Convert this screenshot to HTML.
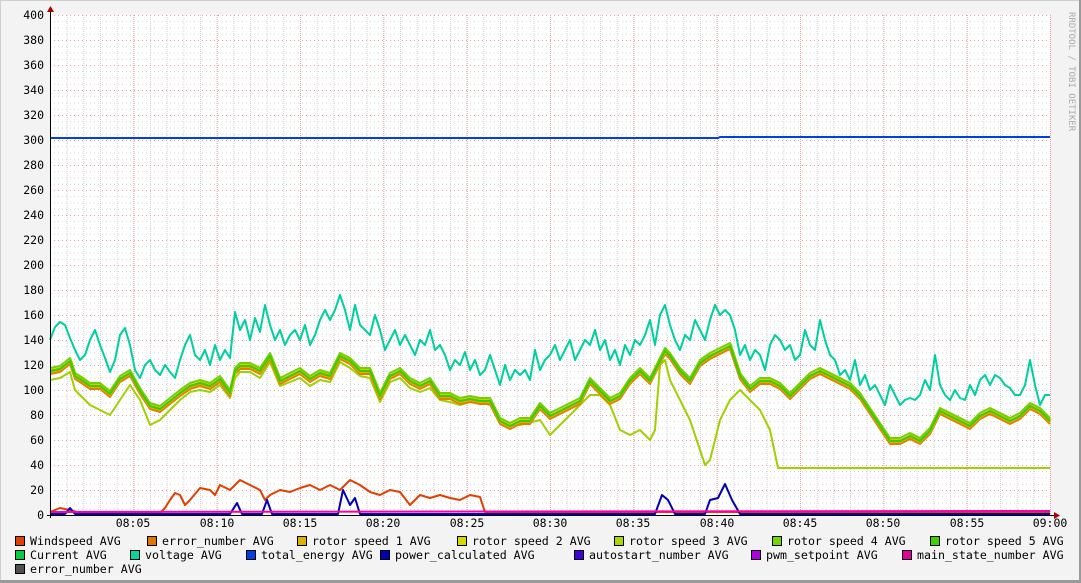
<!DOCTYPE html>
<html><head><meta charset="utf-8"><style>
html,body{margin:0;padding:0;background:#f3f3f3;}
svg{display:block;font-family:"DejaVu Sans Mono","Liberation Mono",monospace;}
</style></head><body>
<svg width="1081" height="583" viewBox="0 0 1081 583" xmlns="http://www.w3.org/2000/svg">
<defs>
<pattern id="hmin" patternUnits="userSpaceOnUse" x="50" y="15" width="4" height="6.25"><line x1="0" y1="0.5" x2="1" y2="0.5" stroke="#d4d4d4" stroke-width="1"/></pattern>
<pattern id="vmin" patternUnits="userSpaceOnUse" x="50" y="15" width="16.6667" height="2"><line x1="0.5" y1="0" x2="0.5" y2="1" stroke="#d4d4d4" stroke-width="1"/></pattern>
<pattern id="hmaj" patternUnits="userSpaceOnUse" x="50" y="15" width="4" height="25"><line x1="0" y1="0.5" x2="1" y2="0.5" stroke="#eaa0a0" stroke-width="1"/></pattern>
<pattern id="vmaj" patternUnits="userSpaceOnUse" x="50" y="15" width="83.333" height="2"><line x1="0.5" y1="0" x2="0.5" y2="1" stroke="#eaa0a0" stroke-width="1"/></pattern>
</defs>
<rect x="0" y="0" width="1081" height="583" fill="#f3f3f3"/>
<line x1="0" y1="0.5" x2="1081" y2="0.5" stroke="#cfcfcf"/>
<line x1="0.5" y1="0" x2="0.5" y2="583" stroke="#cfcfcf"/>
<line x1="0" y1="581.5" x2="1081" y2="581.5" stroke="#9a9a9a" stroke-width="3"/>
<line x1="1080" y1="0" x2="1080" y2="583" stroke="#9a9a9a" stroke-width="2"/>
<rect x="50" y="15" width="1000" height="500" fill="#fff"/>
<rect x="50" y="15" width="1000" height="500" fill="url(#hmin)"/>
<rect x="50" y="15" width="1000" height="500" fill="url(#vmin)"/>
<rect x="50" y="15" width="1000" height="500" fill="url(#hmaj)"/>
<rect x="50" y="15" width="1001" height="500" fill="url(#vmaj)"/>
<g font-size="11.5" fill="#000" text-anchor="end">
<text x="44" y="19">400</text><text x="44" y="44">380</text><text x="44" y="69">360</text><text x="44" y="94">340</text><text x="44" y="119">320</text><text x="44" y="144">300</text><text x="44" y="169">280</text><text x="44" y="194">260</text><text x="44" y="219">240</text><text x="44" y="244">220</text><text x="44" y="269">200</text><text x="44" y="294">180</text><text x="44" y="319">160</text><text x="44" y="344">140</text><text x="44" y="369">120</text><text x="44" y="394">100</text><text x="44" y="419">80</text><text x="44" y="444">60</text><text x="44" y="469">40</text><text x="44" y="494">20</text><text x="44" y="519">0</text>
</g>
<g font-size="11.5" fill="#000" text-anchor="middle">
<text x="133" y="527">08:05</text><text x="217" y="527">08:10</text><text x="300" y="527">08:15</text><text x="383" y="527">08:20</text><text x="467" y="527">08:25</text><text x="550" y="527">08:30</text><text x="633" y="527">08:35</text><text x="717" y="527">08:40</text><text x="800" y="527">08:45</text><text x="883" y="527">08:50</text><text x="967" y="527">08:55</text><text x="1050" y="527">09:00</text>
</g>
<text transform="translate(1069,12) rotate(90)" font-size="9" fill="#aaa">RRDTOOL / TOBI OETIKER</text>
<g fill="none" stroke-width="2" stroke-linejoin="round">
<polyline stroke="#0040e0" points="50,138 718,138 720,137 1050,137"/>
<polyline stroke="#00d0a0" points="50,340 55,327 60,322 65,325 70,338 75,350 80,360 85,355 90,340 95,330 100,345 105,358 110,372 115,360 120,335 125,328 130,345 135,370 140,378 145,365 150,360 155,370 160,375 165,365 170,372 175,378 180,360 185,345 190,335 195,355 200,360 205,350 210,365 215,345 220,360 225,350 230,358 235,312 240,330 245,320 250,340 255,318 260,332 265,305 270,325 275,340 280,330 285,345 290,335 295,330 300,340 305,325 310,345 315,335 320,320 325,310 330,320 335,310 340,295 345,310 350,330 355,305 360,325 365,330 370,335 375,315 380,330 385,350 390,340 395,330 400,345 405,335 410,345 415,355 420,340 425,345 430,330 435,350 440,345 445,355 450,370 455,360 460,365 465,352 470,370 475,360 480,375 485,370 490,355 495,370 500,385 505,365 510,380 515,370 520,375 525,370 530,380 535,350 540,370 545,360 550,355 555,345 560,360 565,350 570,340 575,360 580,350 585,340 590,345 595,330 600,350 605,340 610,360 615,350 620,365 625,345 630,355 635,340 640,345 645,335 650,320 655,345 660,315 665,305 670,325 675,340 680,350 685,335 690,340 695,320 700,330 705,340 710,320 715,305 720,315 725,310 730,315 735,330 740,355 745,345 750,360 755,350 760,355 765,370 770,345 775,335 780,340 785,350 790,345 795,360 800,355 805,330 810,345 815,350 820,320 825,340 830,355 835,360 840,375 845,370 850,380 855,360 860,385 865,375 870,390 875,385 880,395 885,405 890,385 895,395 900,405 905,400 910,398 915,400 920,395 925,380 930,390 935,355 940,385 945,395 950,400 955,390 960,398 965,400 970,385 975,395 980,380 985,375 990,385 995,375 1000,378 1005,385 1010,388 1015,395 1020,395 1025,385 1030,360 1035,385 1040,405 1045,395 1050,395"/>
<polyline stroke="#a0d000" points="50,380 60,378 70,372 75,390 80,395 90,405 100,410 110,415 120,400 130,385 140,400 150,425 160,420 170,410 180,400 190,392 200,390 210,392 220,385 230,398 235,378 240,372 250,372 260,378 270,362 280,386 290,382 300,378 310,386 320,380 330,382 340,362 350,368 360,376 370,378 380,402 390,382 400,378 410,388 420,392 430,388 440,400 450,402 460,405 470,402 480,402 490,405 500,420 510,425 520,425 540,420 550,435 560,425 570,415 580,405 590,395 600,395 610,405 620,430 630,435 640,430 650,440 655,430 660,365 665,360 670,380 680,400 690,420 700,450 705,465 710,460 715,440 720,420 730,400 740,390 750,400 760,410 770,430 778,468 1050,468"/>
<polyline stroke="#e08000" transform="translate(0,4)" points="50,370 60,368 70,360 75,375 80,378 90,385 100,385 110,393 120,378 130,372 140,390 150,405 160,408 170,400 180,392 190,385 200,382 210,385 220,378 230,392 235,370 240,365 250,365 260,370 270,355 280,380 290,375 300,370 310,378 320,372 330,375 340,355 350,360 360,370 370,370 380,395 390,375 400,370 410,380 420,385 430,380 440,395 450,395 460,400 470,398 480,400 490,400 500,420 510,425 520,420 530,420 540,405 550,415 560,410 570,405 580,400 590,380 600,390 610,400 620,395 630,380 640,370 650,380 660,360 665,350 670,355 680,370 690,380 700,362 710,355 720,350 730,345 740,375 750,388 760,380 770,380 780,385 790,395 800,385 810,375 820,370 830,375 840,380 850,385 860,395 870,410 880,425 890,440 900,440 910,435 920,440 930,430 940,410 950,415 960,420 970,425 980,415 990,410 1000,415 1010,420 1020,415 1030,405 1040,410 1050,420"/>
<polyline stroke="#e0b000" transform="translate(0,2)" points="50,370 60,368 70,360 75,375 80,378 90,385 100,385 110,393 120,378 130,372 140,390 150,405 160,408 170,400 180,392 190,385 200,382 210,385 220,378 230,392 235,370 240,365 250,365 260,370 270,355 280,380 290,375 300,370 310,378 320,372 330,375 340,355 350,360 360,370 370,370 380,395 390,375 400,370 410,380 420,385 430,380 440,395 450,395 460,400 470,398 480,400 490,400 500,420 510,425 520,420 530,420 540,405 550,415 560,410 570,405 580,400 590,380 600,390 610,400 620,395 630,380 640,370 650,380 660,360 665,350 670,355 680,370 690,380 700,362 710,355 720,350 730,345 740,375 750,388 760,380 770,380 780,385 790,395 800,385 810,375 820,370 830,375 840,380 850,385 860,395 870,410 880,425 890,440 900,440 910,435 920,440 930,430 940,410 950,415 960,420 970,425 980,415 990,410 1000,415 1010,420 1020,415 1030,405 1040,410 1050,420"/>
<polyline stroke="#d0d000" transform="translate(1,0)" points="50,370 60,368 70,360 75,375 80,378 90,385 100,385 110,393 120,378 130,372 140,390 150,405 160,408 170,400 180,392 190,385 200,382 210,385 220,378 230,392 235,370 240,365 250,365 260,370 270,355 280,380 290,375 300,370 310,378 320,372 330,375 340,355 350,360 360,370 370,370 380,395 390,375 400,370 410,380 420,385 430,380 440,395 450,395 460,400 470,398 480,400 490,400 500,420 510,425 520,420 530,420 540,405 550,415 560,410 570,405 580,400 590,380 600,390 610,400 620,395 630,380 640,370 650,380 660,360 665,350 670,355 680,370 690,380 700,362 710,355 720,350 730,345 740,375 750,388 760,380 770,380 780,385 790,395 800,385 810,375 820,370 830,375 840,380 850,385 860,395 870,410 880,425 890,440 900,440 910,435 920,440 930,430 940,410 950,415 960,420 970,425 980,415 990,410 1000,415 1010,420 1020,415 1030,405 1040,410 1050,420"/>
<polyline stroke="#70d000" transform="translate(0,-2)" points="50,370 60,368 70,360 75,375 80,378 90,385 100,385 110,393 120,378 130,372 140,390 150,405 160,408 170,400 180,392 190,385 200,382 210,385 220,378 230,392 235,370 240,365 250,365 260,370 270,355 280,380 290,375 300,370 310,378 320,372 330,375 340,355 350,360 360,370 370,370 380,395 390,375 400,370 410,380 420,385 430,380 440,395 450,395 460,400 470,398 480,400 490,400 500,420 510,425 520,420 530,420 540,405 550,415 560,410 570,405 580,400 590,380 600,390 610,400 620,395 630,380 640,370 650,380 660,360 665,350 670,355 680,370 690,380 700,362 710,355 720,350 730,345 740,375 750,388 760,380 770,380 780,385 790,395 800,385 810,375 820,370 830,375 840,380 850,385 860,395 870,410 880,425 890,440 900,440 910,435 920,440 930,430 940,410 950,415 960,420 970,425 980,415 990,410 1000,415 1010,420 1020,415 1030,405 1040,410 1050,420"/>
<polyline stroke="#40c800" transform="translate(0,1)" points="50,370 60,368 70,360 75,375 80,378 90,385 100,385 110,393 120,378 130,372 140,390 150,405 160,408 170,400 180,392 190,385 200,382 210,385 220,378 230,392 235,370 240,365 250,365 260,370 270,355 280,380 290,375 300,370 310,378 320,372 330,375 340,355 350,360 360,370 370,370 380,395 390,375 400,370 410,380 420,385 430,380 440,395 450,395 460,400 470,398 480,400 490,400 500,420 510,425 520,420 530,420 540,405 550,415 560,410 570,405 580,400 590,380 600,390 610,400 620,395 630,380 640,370 650,380 660,360 665,350 670,355 680,370 690,380 700,362 710,355 720,350 730,345 740,375 750,388 760,380 770,380 780,385 790,395 800,385 810,375 820,370 830,375 840,380 850,385 860,395 870,410 880,425 890,440 900,440 910,435 920,440 930,430 940,410 950,415 960,420 970,425 980,415 990,410 1000,415 1010,420 1020,415 1030,405 1040,410 1050,420 1050,420"/>
<polyline stroke="#e04000" points="50,512 60,508 70,510 80,513 160,513 165,508 170,500 175,493 180,495 185,505 190,500 200,488 210,490 215,495 220,485 230,490 240,480 250,485 260,490 265,500 270,495 280,490 290,492 300,488 310,485 320,490 330,485 340,490 350,480 360,485 370,492 380,495 390,490 400,492 410,505 420,495 430,498 440,495 450,498 460,500 470,495 480,497 485,512 1050,512"/>
<polyline stroke="#0000b0" points="50,514 65,514 70,508 75,514 230,514 237,503 242,514 262,514 267,500 272,514 338,514 343,490 350,505 355,498 360,514 655,514 662,495 668,500 675,514 705,514 710,500 718,498 725,484 732,500 740,514 1050,514"/>
<polyline stroke="#ff00a0" points="50,512 1050,511"/>
</g>
<line x1="50.5" y1="10" x2="50.5" y2="518" stroke="#000"/>
<line x1="47" y1="515.5" x2="1055" y2="515.5" stroke="#000"/>
<polygon points="47,12 54,12 50.5,6" fill="#a00"/>
<polygon points="1054,512 1054,519 1060,515.5" fill="#a00"/>
<g font-size="11.6" fill="#000" stroke="#000" stroke-width="1">
<rect x="15.5" y="536.5" width="9" height="9" fill="#e04000"/><rect x="147.5" y="536.5" width="9" height="9" fill="#e07800"/><rect x="297.5" y="536.5" width="9" height="9" fill="#e0b000"/><rect x="457.5" y="536.5" width="9" height="9" fill="#d8d800"/><rect x="614.5" y="536.5" width="9" height="9" fill="#a8d800"/><rect x="772.5" y="536.5" width="9" height="9" fill="#70d800"/><rect x="930.5" y="536.5" width="9" height="9" fill="#40d000"/>
<rect x="15.5" y="550.5" width="9" height="9" fill="#00d040"/><rect x="130.5" y="550.5" width="9" height="9" fill="#00d8a0"/><rect x="246.5" y="550.5" width="9" height="9" fill="#0040e0"/><rect x="380.5" y="550.5" width="9" height="9" fill="#0000b0"/><rect x="574.5" y="550.5" width="9" height="9" fill="#4000e0"/><rect x="751.5" y="550.5" width="9" height="9" fill="#b000e0"/><rect x="902.5" y="550.5" width="9" height="9" fill="#e000a0"/>
<rect x="15.5" y="564.5" width="9" height="9" fill="#505050"/>
</g>
<g font-size="11.6" fill="#000">
<text x="30" y="545">Windspeed AVG</text><text x="162" y="545">error_number AVG</text><text x="312" y="545">rotor speed 1 AVG</text><text x="472" y="545">rotor speed 2 AVG</text><text x="629" y="545">rotor speed 3 AVG</text><text x="787" y="545">rotor speed 4 AVG</text><text x="945" y="545">rotor speed 5 AVG</text>
<text x="30" y="559">Current AVG</text><text x="145" y="559">voltage AVG</text><text x="261" y="559">total_energy AVG</text><text x="395" y="559">power_calculated AVG</text><text x="589" y="559">autostart_number AVG</text><text x="766" y="559">pwm_setpoint AVG</text><text x="917" y="559">main_state_number AVG</text>
<text x="30" y="573">error_number AVG</text>
</g>
</svg>
</body></html>
